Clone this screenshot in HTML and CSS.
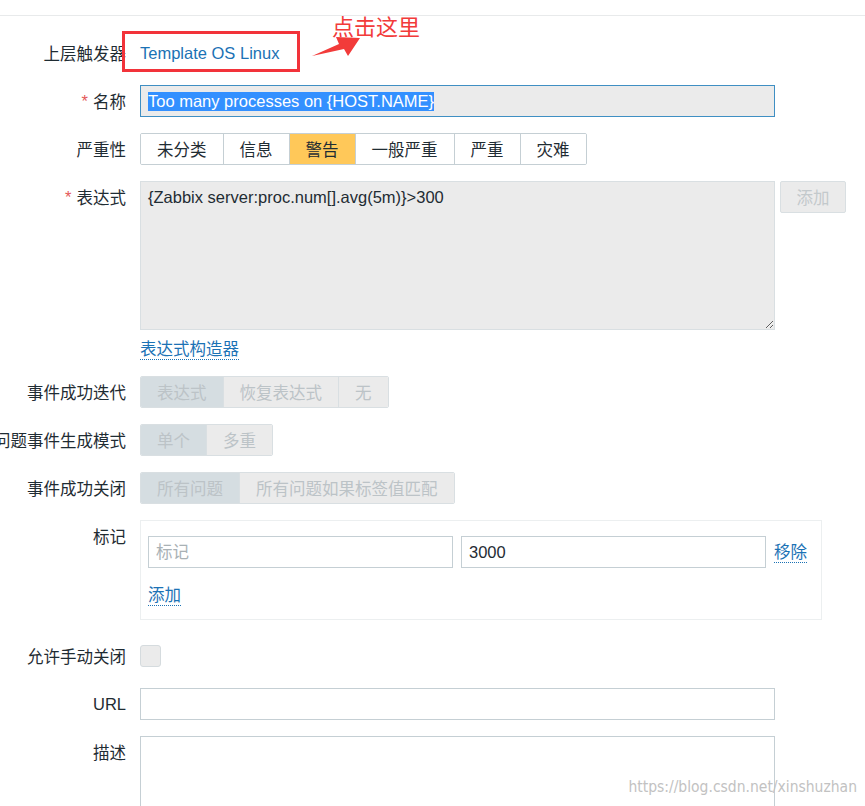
FILE: index.html
```html
<!DOCTYPE html>
<html lang="zh-CN">

<head>
    <meta charset="UTF-8">
    <meta name="viewport" content="width=device-width, initial-scale=1.0">
    <title>触发器</title>
    <link rel="stylesheet" href="styles.css">
</head>

<body>

    <div class="topbar"></div>

    <form class="trigger-form">

        <div class="row">
            <div class="label">上层触发器</div>
            <div class="field parent-field">
                <a class="link" href="#">Template OS Linux</a>
                <span class="callout-box"></span>
                <svg class="callout-arrow" width="52" height="24" viewBox="0 0 52 24">
                    <polygon points="1,21 28,9 25,2 49,3 37,21 33,14" fill="#f23b3a" />
                </svg>
                <span class="callout-text">点击这里</span>
            </div>
        </div>

        <div class="row">
            <div class="label"><span class="req">*</span>名称</div>
            <div class="field">
                <div class="input input-focus"><span class="selected">Too many processes on {HOST.NAME}</span></div>
            </div>
        </div>

        <div class="row">
            <div class="label">严重性</div>
            <div class="field">
                <div class="seg">
                    <button type="button">未分类</button>
                    <button type="button">信息</button>
                    <button type="button" class="warning">警告</button>
                    <button type="button">一般严重</button>
                    <button type="button">严重</button>
                    <button type="button">灾难</button>
                </div>
            </div>
        </div>

        <div class="row">
            <div class="label"><span class="req">*</span>表达式</div>
            <div class="field">
                <div class="expr-wrap">
                    <textarea class="expr" readonly>{Zabbix server:proc.num[].avg(5m)}>300</textarea>
                    <button type="button" class="btn-disabled">添加</button>
                </div>
                <a class="link dotted builder" href="#">表达式构造器</a>
            </div>
        </div>

        <div class="row">
            <div class="label">事件成功迭代</div>
            <div class="field">
                <div class="seg seg-disabled">
                    <button type="button" class="on">表达式</button>
                    <button type="button">恢复表达式</button>
                    <button type="button">无</button>
                </div>
            </div>
        </div>

        <div class="row">
            <div class="label">问题事件生成模式</div>
            <div class="field">
                <div class="seg seg-disabled">
                    <button type="button" class="on">单个</button>
                    <button type="button">多重</button>
                </div>
            </div>
        </div>

        <div class="row">
            <div class="label">事件成功关闭</div>
            <div class="field">
                <div class="seg seg-disabled">
                    <button type="button" class="on">所有问题</button>
                    <button type="button">所有问题如果标签值匹配</button>
                </div>
            </div>
        </div>

        <div class="row">
            <div class="label">标记</div>
            <div class="field">
                <div class="tags-box">
                    <div class="tag-line">
                        <input class="input tag-input" type="text" placeholder="标记">
                        <input class="input tag-input" type="text" value="3000">
                        <a class="link dotted" href="#">移除</a>
                    </div>
                    <a class="link dotted tag-add" href="#">添加</a>
                </div>
            </div>
        </div>

        <div class="row row-check">
            <div class="label">允许手动关闭</div>
            <div class="field check-field">
                <span class="checkbox"></span>
            </div>
        </div>

        <div class="row">
            <div class="label">URL</div>
            <div class="field">
                <input class="input" type="text">
            </div>
        </div>

        <div class="row">
            <div class="label">描述</div>
            <div class="field">
                <textarea class="desc"></textarea>
            </div>
        </div>

    </form>

    <div class="watermark">https://blog.csdn.net/xinshuzhan</div>

</body>

</html>
```

FILE: styles.css
```css
:root {
    --text: #1f2c33;
    --link: #1b72b5;
    --field-border: #c5cfd4;
    --disabled-bg: #ebebeb;
    --disabled-border: #d9dfe2;
    --disabled-text: #bcc3c7;
}

* {
    box-sizing: border-box;
}

body {
    margin: 0;
    position: relative;
    background: #fff;
    color: var(--text);
    font-family: "Liberation Sans", Arial, "Noto Sans CJK SC", sans-serif;
    font-size: 16.5px;
    overflow: hidden;
}

.topbar {
    height: 16px;
    border-bottom: 1px solid #e8eaeb;
}

.trigger-form {
    display: flex;
    flex-direction: column;
    gap: 16px;
    padding-top: 21px;
}

.row {
    display: grid;
    grid-template-columns: 126px 1fr;
    column-gap: 14px;
}

.label {
    display: flex;
    justify-content: flex-end;
    align-items: center;
    height: 32px;
    white-space: nowrap;
}

.label .req {
    color: #e45959;
    margin-right: 5px;
}

.field {
    display: flex;
    flex-direction: column;
    align-items: flex-start;
}

.link {
    color: var(--link);
    text-decoration: none;
}

.link.dotted {
    border-bottom: 1px dotted var(--link);
    line-height: 20px;
}

/* annotation over the first row */
.parent-field {
    position: relative;
    height: 32px;
    justify-content: center;
}

.callout-box {
    position: absolute;
    left: -18px;
    top: -6px;
    width: 178px;
    height: 41px;
    border: 3px solid #f2333a;
}

.callout-arrow {
    position: absolute;
    left: 171px;
    top: -2px;
}

.callout-text {
    position: absolute;
    left: 192px;
    top: -22px;
    color: #f23b3a;
    font-size: 22px;
    line-height: 26px;
    white-space: nowrap;
}

.input {
    width: 635px;
    height: 32px;
    padding: 0 7px;
    border: 1px solid var(--field-border);
    background: #fff;
    font: inherit;
    color: var(--text);
    outline: none;
}

.input-focus {
    display: flex;
    align-items: center;
    background: #ebebeb;
    border-color: #3f8fc3;
}

.selected {
    background: #3390ff;
    color: #fff;
    line-height: 19px;
}

.seg {
    display: inline-flex;
    border: 1px solid var(--field-border);
    border-radius: 2px;
    overflow: hidden;
}

.seg button {
    height: 30px;
    padding: 0 16px;
    border: none;
    border-left: 1px solid var(--field-border);
    background: #fff;
    font: inherit;
    color: var(--text);
}

.seg button:first-child {
    border-left: none;
}

.seg button.warning {
    background: #ffc859;
}

.seg-disabled {
    border-color: var(--disabled-border);
}

.seg-disabled button {
    background: var(--disabled-bg);
    border-left-color: var(--disabled-border);
    color: var(--disabled-text);
}

.seg-disabled button.on {
    background: #d5dde1;
}

.expr-wrap {
    display: flex;
    align-items: flex-start;
    gap: 5px;
}

.expr {
    width: 635px;
    height: 149px;
    padding: 5px 7px;
    border: 1px solid var(--disabled-border);
    background: var(--disabled-bg);
    font: inherit;
    line-height: 20px;
    color: var(--text);
    resize: vertical;
    outline: none;
}

.btn-disabled {
    width: 66px;
    height: 32px;
    border: 1px solid var(--disabled-border);
    border-radius: 2px;
    background: var(--disabled-bg);
    font: inherit;
    color: #c3c9cc;
}

.builder {
    margin-top: 9px;
}

.tags-box {
    width: 682px;
    padding: 15px 14px 13px 7px;
    border: 1px solid #eceff0;
}

.tag-line {
    display: flex;
    align-items: center;
    gap: 8px;
}

.tag-input {
    width: 305px;
}

.tag-input::placeholder {
    color: #a9b1b5;
}

.tag-add {
    display: inline-block;
    margin-top: 17px;
}

.row-check {
    margin-top: 4px;
}

.check-field {
    height: 32px;
    justify-content: center;
}

.checkbox {
    display: block;
    width: 21px;
    height: 22px;
    border: 1px solid #d5dbde;
    border-radius: 3px;
    background: #ebebeb;
}

.desc {
    width: 635px;
    height: 110px;
    border: 1px solid var(--field-border);
    font: inherit;
    resize: none;
    outline: none;
}

.watermark {
    position: absolute;
    top: 778px;
    right: 8px;
    color: #c2c2c2;
    font-family: "Liberation Sans Narrow", "DejaVu Sans Condensed", sans-serif;
    font-size: 15.5px;
}
```
